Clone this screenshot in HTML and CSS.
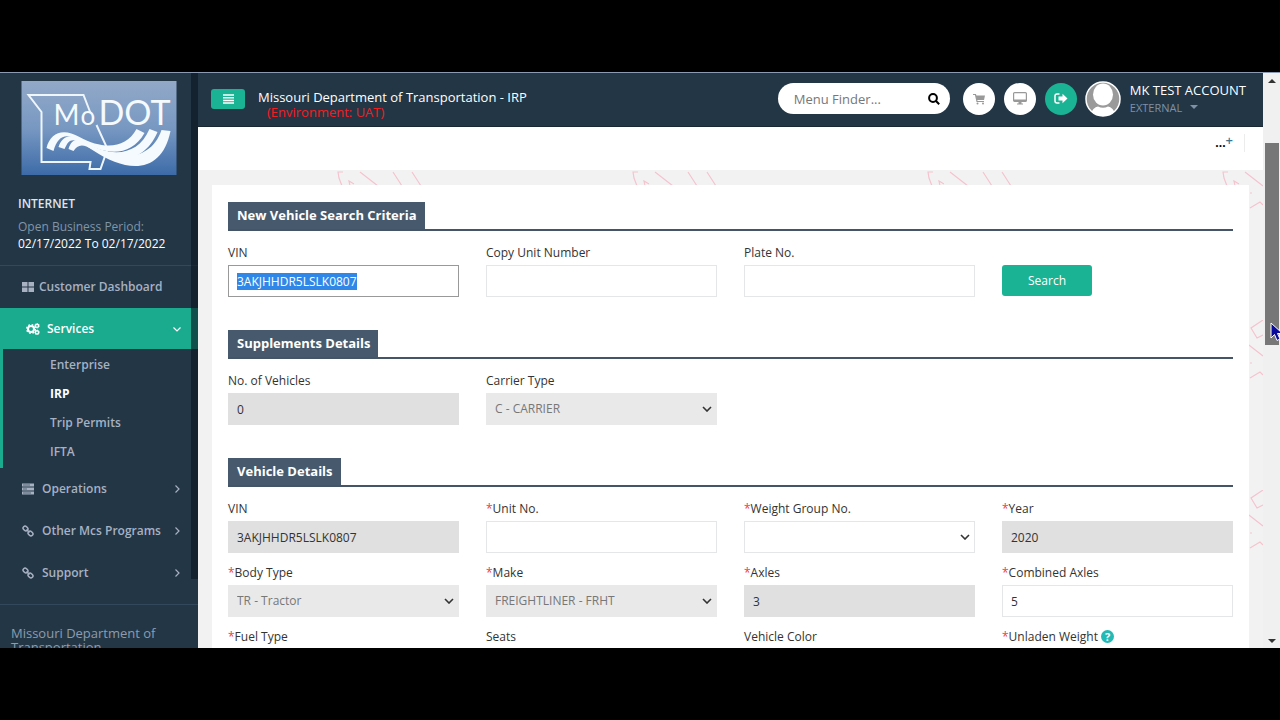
FILE: index.html
```html
<!DOCTYPE html>
<html lang="en">
<head>
<meta charset="utf-8">
<title>Missouri Department of Transportation - IRP</title>
<link rel="stylesheet" href="styles.css">
</head>
<body>
<div class="app">
  <aside class="sidebar">
    <svg class="logo" viewBox="0 0 155 94" role="img" aria-label="MoDOT">
      <defs><linearGradient id="sky" x1="0" y1="0" x2="0" y2="1"><stop offset="0" stop-color="#92a9c8"/><stop offset=".5" stop-color="#7898c2"/><stop offset="1" stop-color="#3d6ba8"/></linearGradient></defs>
      <rect width="155" height="94" fill="url(#sky)"/>
      <path d="M69 32 62 14H7L20 31V81H69L68 88H79L86 68 75 44" fill="none" stroke="#eef5fb" stroke-width="2"/>
      <g class="logo-text"><text x="32" y="44" font-size="28">M</text><text x="59" y="44" font-size="26">o</text><text x="77" y="44" font-size="34">DOT</text></g>
      <g fill="#f4fafe">
        <path d="M25 67C29 51 42 47 58 56C82 69 104 68 115 48L123 52C108 78 82 74 55 58C43 52 36 56 32 70Z"/>
        <path d="M37 66C41 54 50 52 62 60C88 77 116 76 128 48L136 51C121 86 90 82 62 63C50 56 47 59 43 68Z"/>
        <path d="M47 68C50 57 58 56 68 64C94 82 130 80 140 49L149 50C140 94 105 92 71 69C61 62 56 64 52 70Z"/>
      </g>
    </svg>
    <div class="period">
      <div class="period-net">INTERNET</div>
      <div class="period-label">Open Business Period:</div>
      <div class="period-dates">02/17/2022 To 02/17/2022</div>
    </div>
    <nav class="menu">
      <a class="item dashboard" href="#"><svg class="ico" viewBox="0 0 12 12"><path d="M0 1h5.500v4.500H0zM6.500 1H12v4.500H6.500zM0 6.500h5.500V11H0zM6.500 6.500H12V11H6.500z"/></svg>Customer Dashboard</a>
      <a class="item services" href="#"><svg class="ico gears" viewBox="0 0 14 12"><circle cx="5" cy="6" r="3" fill="none" stroke="#fff" stroke-width="2"/><circle cx="5" cy="6" r="4.300" fill="none" stroke="#fff" stroke-width="1.400" stroke-dasharray="1.700"/><g fill="none" stroke="#fff"><circle cx="11" cy="2.800" r="1.600" stroke-width="1.400"/><circle cx="11" cy="9.400" r="1.600" stroke-width="1.400"/><circle cx="11" cy="2.800" r="2.400" stroke-width=".8" stroke-dasharray="1"/><circle cx="11" cy="9.400" r="2.400" stroke-width=".8" stroke-dasharray="1"/></g></svg>Services<svg class="arrow" viewBox="0 0 8 8"><path d="M.5 2.500 4 6 7.500 2.500"/></svg></a>
      <div class="submenu">
        <a href="#">Enterprise</a>
        <a class="current" href="#">IRP</a>
        <a href="#">Trip Permits</a>
        <a href="#">IFTA</a>
      </div>
      <a class="item" href="#"><svg class="ico server" viewBox="0 0 12 11"><path d="M0 0h12v3H0zM0 4h12v3H0zM0 8h12v3H0z"/><path d="M1 1.500h7M1 5.500h4M1 9.500h8" stroke="#233646" stroke-width=".6"/></svg>Operations<svg class="arrow" viewBox="0 0 8 8"><path d="M2.500 .5 6 4 2.500 7.500"/></svg></a>
      <a class="item" href="#"><svg class="ico link" viewBox="0 0 12 12"><g fill="none" stroke="#a7b1c2" stroke-width="1.500"><rect x="-2.600" y="-2" width="5.200" height="4" rx="2" transform="translate(3.500 3.500) rotate(45)"/><rect x="-2.600" y="-2" width="5.200" height="4" rx="2" transform="translate(8.500 8.500) rotate(45)"/><path d="M4.500 4.500 7.500 7.500"/></g></svg>Other Mcs Programs<svg class="arrow" viewBox="0 0 8 8"><path d="M2.500 .5 6 4 2.500 7.500"/></svg></a>
      <a class="item" href="#"><svg class="ico link" viewBox="0 0 12 12"><g fill="none" stroke="#a7b1c2" stroke-width="1.500"><rect x="-2.600" y="-2" width="5.200" height="4" rx="2" transform="translate(3.500 3.500) rotate(45)"/><rect x="-2.600" y="-2" width="5.200" height="4" rx="2" transform="translate(8.500 8.500) rotate(45)"/><path d="M4.500 4.500 7.500 7.500"/></g></svg>Support<svg class="arrow" viewBox="0 0 8 8"><path d="M2.500 .5 6 4 2.500 7.500"/></svg></a>
    </nav>
    <div class="owner">Missouri Department of Transportation</div>
    <div class="side-scroll"></div>
  </aside>

  <div class="main">
    <header class="topbar">
      <button class="toggle" aria-label="Toggle menu"><svg viewBox="0 0 11 10"><path d="M0 1h11M0 3.700h11M0 6.400h11M0 9.100h11" stroke="#fff" stroke-width="1.500"/></svg></button>
      <div class="title"><div>Missouri Department of Transportation - IRP</div><div class="env">(Environment: UAT)</div></div>
      <label class="finder"><input type="text" placeholder="Menu Finder..." aria-label="Menu Finder"><svg viewBox="0 0 12 12"><circle cx="5" cy="5" r="3.900"/><path d="M8 8 11.200 11.200"/></svg></label>
      <button class="round" aria-label="Cart"><svg viewBox="0 0 12 12"><path d="M0 1.500h2.500L4 8.500h7" fill="none" stroke="#999" stroke-width="1.200"/><path d="M2.700 2.500H12L11 7H3.800z"/><circle cx="4.500" cy="10.500" r="1"/><circle cx="10" cy="10.500" r="1"/></svg></button>
      <button class="round" aria-label="Display"><svg class="wide" viewBox="0 0 14 13"><rect x=".6" y=".6" width="12.800" height="8.800" rx="1" fill="none" stroke="#999" stroke-width="1.200"/><path d="M1 7.500h12v2H1zM5.500 10h3v1.500H10v1H4v-1h1.500z"/></svg></button>
      <button class="round exit" aria-label="Log out"><svg class="wide" viewBox="0 0 14 12"><path d="M5.500 1.500H3Q1 1.500 1 3.500v5Q1 10.500 3 10.500h2.500" fill="none" stroke="#fff" stroke-width="1.500"/><path d="M4.500 4h4V1.200L13.500 6 8.500 10.800V8h-4z" fill="#fff"/></svg></button>
      <svg class="avatar" viewBox="0 0 36 36"><defs><clipPath id="face"><circle cx="18" cy="18" r="17"/></clipPath></defs><circle cx="18" cy="18" r="17" fill="#9a9a9a"/><g clip-path="url(#face)" fill="#fff"><ellipse cx="18" cy="13.500" rx="10" ry="11"/><path d="M4 36Q8 26 13 25.500Q18 28 23 25.500Q28 26 32 36Z"/></g><circle cx="18" cy="18" r="17" fill="none" stroke="#fff" stroke-width="1.500"/></svg>
      <div class="account"><div class="name">MK TEST ACCOUNT</div><button class="role">EXTERNAL <span class="caret"></span></button></div>
    </header>
    <div class="crumb"><a href="#"><span>...</span><sup>+</sup></a></div>
    <div class="content">
      <svg class="watermark" aria-hidden="true"><defs><pattern id="mark" x="139" y="-20" width="295" height="170" patternUnits="userSpaceOnUse"><path d="M6 22H1L2 28 5 36M13 36 12 31 17 34M23 22 41 36M56 22 65 36M75 22 84 36M28 43h2M28 58 38 52 41 55M41 0 29 8 35 18 41 15"/></pattern></defs><rect width="100%" height="100%" fill="url(#mark)"/></svg>
      <form class="card">
        <section>
          <h2><span>New Vehicle Search Criteria</span></h2>
          <div class="grid">
            <div class="field"><label for="svin">VIN</label><input class="active" id="svin" type="text" value="3AKJHHDR5LSLK0807"></div>
            <div class="field"><label for="copy">Copy Unit Number</label><input id="copy" type="text"></div>
            <div class="field"><label for="plate">Plate No.</label><input id="plate" type="text"></div>
            <div class="field"><button class="search" type="button">Search</button></div>
          </div>
        </section>
        <section>
          <h2><span>Supplements Details</span></h2>
          <div class="grid">
            <div class="field"><label for="count">No. of Vehicles</label><input id="count" type="text" value="0" readonly></div>
            <div class="field"><label for="carrier">Carrier Type</label><select id="carrier" disabled><option>C - CARRIER</option></select></div>
          </div>
        </section>
        <section>
          <h2><span>Vehicle Details</span></h2>
          <div class="grid">
            <div class="field"><label for="vin">VIN</label><input id="vin" type="text" value="3AKJHHDR5LSLK0807" readonly></div>
            <div class="field"><label for="unit"><i>*</i>Unit No.</label><input id="unit" type="text"></div>
            <div class="field"><label for="group"><i>*</i>Weight Group No.</label><select id="group"><option></option></select></div>
            <div class="field"><label for="year"><i>*</i>Year</label><input id="year" type="text" value="2020" readonly></div>
            <div class="field"><label for="body"><i>*</i>Body Type</label><select id="body" disabled><option>TR - Tractor</option></select></div>
            <div class="field"><label for="make"><i>*</i>Make</label><select id="make" disabled><option>FREIGHTLINER - FRHT</option></select></div>
            <div class="field"><label for="axles"><i>*</i>Axles</label><input id="axles" type="text" value="3" readonly></div>
            <div class="field"><label for="combined"><i>*</i>Combined Axles</label><input id="combined" type="text" value="5"></div>
            <div class="field"><label for="fuel"><i>*</i>Fuel Type</label><select id="fuel"><option></option></select></div>
            <div class="field"><label for="seats">Seats</label><input id="seats" type="text"></div>
            <div class="field"><label for="color">Vehicle Color</label><input id="color" type="text"></div>
            <div class="field"><label for="weight"><i>*</i>Unladen Weight <span class="help">?</span></label><input id="weight" type="text"></div>
          </div>
        </section>
      </form>
    </div>
  </div>

  <div class="scrollbar">
    <svg class="tip" viewBox="0 0 8 4"><path d="M0 4 4 0 8 4z"/></svg>
    <div class="track"><div class="thumb"></div></div>
    <svg class="tip" viewBox="0 0 8 4"><path d="M0 0h8L4 4z"/></svg>
  </div>
  <svg class="cursor" viewBox="0 0 12 20"><path d="M1 1V16L4.500 12.500 7 18.500 10 17 7.500 11.500H12.500z"/></svg>
</div>
<script src="page.js"></script>
</body>
</html>
```
FILE: page.js
```js
const vin = document.getElementById('svin');
vin.focus();
vin.select();
```
FILE: styles.css
```css
* { box-sizing: border-box; }
body { margin: 0; background: #000; font: 12px/18px "Open Sans", "Noto Sans", sans-serif; color: #333; }
a { color: inherit; text-decoration: none; }
button, input, select { font: inherit; }
button { border: 0; padding: 0; cursor: pointer; }

.app { position: relative; display: flex; height: calc(100vh - 144px); margin-top: 72px; overflow: hidden; border-top: 1px solid #8c9bb4; }

.sidebar { position: relative; flex: 0 0 198px; overflow: hidden; background: #233646; color: #a7b1c2; font-size: 12px; font-weight: 600; }
.logo { display: block; width: 156px; height: 94px; margin: 8px 0 0 21px; }
.logo-text { fill: #f4fafe; font-family: Lato, "Open Sans", sans-serif; font-weight: 400; }
.period { padding: 20px 18px 12px; border-bottom: 1px solid #33485a; font-size: 12px; }
.period-net { padding-bottom: 5px; color: #dfe4ed; }
.period-label { height: 17px; font-size: 12px; line-height: 17px; font-weight: 500; color: #8095a8; }
.period-dates { color: #fff; font-weight: 400; }
.menu { padding-bottom: 10px; border-bottom: 1px solid #33485a; }
.item { display: flex; align-items: center; height: 42px; padding: 0 17px 0 22px; white-space: nowrap; }
.ico { flex: none; width: 12px; height: 12px; margin-right: 8px; fill: #a7b1c2; }
.dashboard .ico { margin-right: 5px; }
.arrow { width: 8px; height: 8px; margin-left: auto; fill: none; stroke: currentColor; stroke-width: 1.2; }
.services { height: 41px; padding-left: 26px; background: #1aab8e; color: #fff; }
.gears { width: 14px; margin-right: 7px; }
.submenu { display: grid; padding: 1px 0 2px 47px; border-left: 3px solid #1aab8e; }
.submenu a { line-height: 29px; }
.submenu .current { color: #fff; font-weight: 700; }
.menu + .owner { margin-top: -1px; }
.owner { padding: 22px 30px 0 11px; font-size: 13px; font-weight: 400; line-height: 14px; color: #8c9cae; }
.side-scroll { position: absolute; top: 0; right: 0; width: 7px; height: 506px; background: rgba(10, 20, 32, .6); }

.main { display: flex; flex: 1; flex-direction: column; min-width: 0; background: #f2f2f3; }
.topbar { display: flex; flex: none; align-items: center; height: 54px; padding: 0 17px 2px 13px; background: #233646; color: #fff; border-bottom: 1px solid #1a2733; }
.toggle { display: grid; place-items: center; width: 34px; height: 20px; border-radius: 3px; background: #1ab394; }
.toggle svg { width: 11px; height: 10px; }
.title { margin: 12px auto 0 13px; font-size: 13px; line-height: 15px; }
.env { padding-left: 9px; color: #f21f1f; }
.finder { display: flex; align-items: center; width: 172px; height: 31px; margin-right: 13px; padding: 0 10px 0 16px; border-radius: 16px; background: #fff; }
.finder input { width: 100%; min-width: 0; padding: 0; border: 0; outline: 0; background: none; font-size: 13px; }
.finder input::placeholder { color: #777; }
.finder svg { flex: none; width: 12px; height: 12px; fill: none; stroke: #000; stroke-width: 2; }
.round { display: grid; place-items: center; width: 32px; height: 32px; margin-right: 9px; border-radius: 50%; background: #fff; }
.round svg { width: 12px; height: 12px; fill: #999; }
.round svg.wide { width: 14px; height: 13px; }
.exit { margin-right: 8px; background: #1ab394; }
.avatar { flex: none; width: 36px; height: 36px; margin-right: 9px; }
.account { line-height: 17px; white-space: nowrap; }
.name { font-size: 13px; font-weight: 500; }
.role { display: flex; align-items: center; gap: 8px; background: none; color: #7f91a4; font-size: 11px; line-height: 17px; }
.caret { border: 4px solid transparent; border-top-color: #7f91a4; border-bottom: 0; }
.crumb { display: flex; flex: none; align-items: flex-start; justify-content: flex-end; height: 43px; padding: 7px 18px 0 0; background: #fff; color: #000; font-weight: 700; }
.crumb a { padding-right: 11px; border-right: 1px solid #ececec; }
.crumb sup { color: #3b7590; font-size: 13px; font-weight: 600; line-height: 11px; vertical-align: 2px; }

.content { position: relative; flex: 1; min-height: 0; overflow: hidden; padding: 15px 14px 0; }
.watermark { position: absolute; inset: 0; width: 100%; height: 100%; }
.watermark path { fill: none; stroke: #f5c3ce; stroke-width: 1.2; }
.card { position: relative; padding: 17px 16px 40px; background: #fff; }
section { margin-bottom: 33px; }
h2 { margin: 0 0 12px; border-bottom: 2px solid #445567; font-size: 13px; line-height: 27px; }
h2 span { display: inline-block; padding: 0 8px 0 9px; background: #475a6d; color: #fff; vertical-align: top; }
.grid { display: grid; grid-template-columns: repeat(4, minmax(0, 1fr)); gap: 10px 27px; }
.field { display: flex; flex-direction: column; }
.field label { height: 22px; line-height: 19px; }
.field i { color: #ed3a4c; font-style: normal; }
.field input, .field select { width: 100%; height: 32px; padding: 0 8px; border: 1px solid #e5e6e7; border-radius: 0; outline: 0; background: #fff; color: #333; }
.field select { appearance: none; background: #fff url("data:image/svg+xml,%3Csvg xmlns='http://www.w3.org/2000/svg' width='10' height='6'%3E%3Cpath d='M1 1l4 4 4-4' fill='none' stroke='%23333' stroke-width='1.600'/%3E%3C/svg%3E") no-repeat right 4px center; }
.field input:read-only { border-color: #e0e0e0; background: #e0e0e0; }
.field select:disabled { border-color: #e9e9e9; background-color: #e9e9e9; color: #777; opacity: 1; }
.field .active { border-color: #999; }
.active::selection { background: #3087e8; color: #fff; }
.search { width: 90px; height: 31px; margin-top: 22px; border-radius: 3px; background: #1ab394; color: #fff; }
.help { display: inline-block; width: 13px; height: 13px; border-radius: 50%; background: #23b9b5; color: #fff; font-size: 11px; font-weight: 700; line-height: 13px; text-align: center; }

.scrollbar { display: flex; flex: 0 0 17px; flex-direction: column; align-items: center; padding: 6px 1px 5px; background: #f0f0f0; }
.tip { width: 8px; height: 4px; fill: #333; }
.track { flex: 1; width: 100%; padding-top: 60px; }
.thumb { width: 14px; height: 202px; margin-left: 1px; background: #777; }
.cursor { position: absolute; top: 249px; left: calc(100% - 10px); width: 12px; height: 20px; fill: #0a0a9c; stroke: #fff; }
```
